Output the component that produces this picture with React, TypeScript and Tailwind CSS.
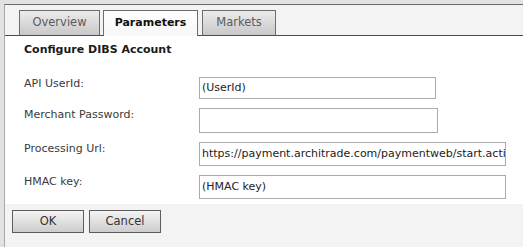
export default function App() {
  const fields = [
    { label: "API UserId:", value: "(UserId)", w: "w-[237px]", h: "h-[22px]" },
    { label: "Merchant Password:", value: "", w: "w-[239px]", h: "h-[25px]" },
    { label: "Processing Url:", value: "https://payment.architrade.com/paymentweb/start.action", w: "w-[307px]", h: "h-[24px]" },
    { label: "HMAC key:", value: "(HMAC key)", w: "w-[307px]", h: "h-[24px]" },
  ];

  return (
    <div className="w-[523px] h-[247px] bg-[#e2e2e2] pt-[4px] pl-[4px] overflow-hidden font-['DejaVu_Sans',sans-serif] text-[11px] text-[#333]">
      <div className="h-full flex flex-col bg-[#f3f3f3] border-t border-t-[#6a6a6a] border-l border-l-[#a8a8a8]">
        {/* Tabs */}
        <div className="flex items-end gap-[3px] pl-[14px] pt-[5px] border-b border-[#4d4d4d] shrink-0">
          <div className="w-[81px] h-[25px] flex items-center justify-center border border-b-0 border-[#6d6d6d] bg-gradient-to-b from-[#ececec] to-[#c8c8c8] text-[11.5px] text-[#5a5a5a]">
            Overview
          </div>
          <div className="w-[95px] h-[26px] -mb-px flex items-center justify-center border border-b-0 border-[#6d6d6d] bg-gradient-to-b from-[#ffffff] to-[#f7f7f7] text-[11px] font-bold text-[#111]">
            Parameters
          </div>
          <div className="ml-px w-[74px] h-[25px] flex items-center justify-center border border-b-0 border-[#6d6d6d] bg-gradient-to-b from-[#ececec] to-[#c8c8c8] text-[11.5px] text-[#5a5a5a]">
            Markets
          </div>
        </div>

        {/* Content */}
        <div className="bg-white pl-[19px] pt-[6px] pb-[5px] shrink-0">
          <h2 className="h-[16px] leading-[16px] text-[11px] font-bold text-[#1a1a1a]">Configure DIBS Account</h2>
          <div className="mt-[18px] flex flex-col gap-[8px]">
            {fields.map((f) => (
              <div key={f.label} className="flex items-start">
                <span className="w-[175px] leading-[16px] text-[#3a3a3a]">{f.label}</span>
                <div className={`mt-px ${f.w} ${f.h} border border-[#ababab] bg-white px-[2px] flex items-center overflow-hidden whitespace-nowrap text-[11px] text-[#222]`}>
                  {f.value}
                </div>
              </div>
            ))}
          </div>
        </div>

        {/* Footer */}
        <div className="flex gap-[5px] pl-[7px] pt-[6px]">
          <button className="w-[72px] h-[23px] border border-[#5c5c5c] bg-gradient-to-b from-[#f4f4f4] to-[#cdcdcd] text-[11.5px] text-[#333]">OK</button>
          <button className="w-[72px] h-[23px] border border-[#5c5c5c] bg-gradient-to-b from-[#f4f4f4] to-[#cdcdcd] text-[11.5px] text-[#333]">Cancel</button>
        </div>
      </div>
    </div>
  );
}
